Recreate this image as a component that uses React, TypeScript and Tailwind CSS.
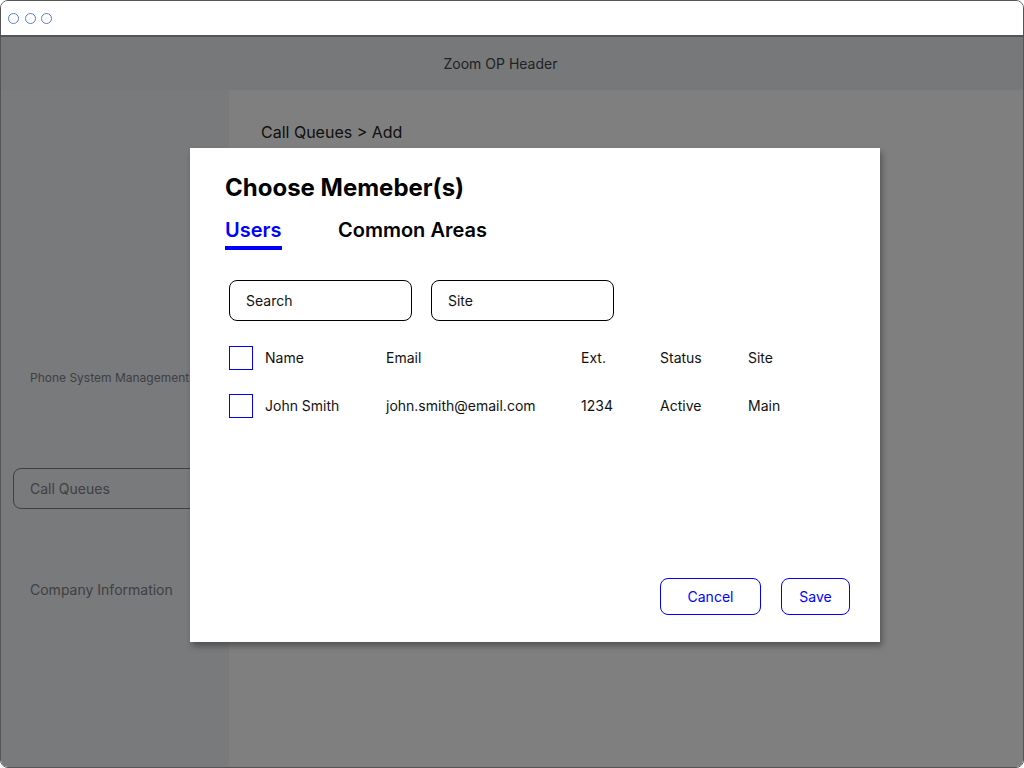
import { ReactNode } from "react";

const font = { fontFamily: "Inter, 'Liberation Sans', sans-serif" };

function Circle() {
  return <span className="size-[11px] rounded-full border-[1.5px] border-[#5b7fcc]" />;
}

function Checkbox() {
  return <span className="block size-6 border border-[#0000ff]" />;
}

function Row({ cells, className }: { cells: ReactNode[]; className?: string }) {
  return (
    <div
      className={
        "grid grid-cols-[36px_121px_195px_79px_88px_1fr] items-center h-6 text-sm text-[#111] " +
        (className ?? "")
      }
    >
      <Checkbox />
      {cells.map((c, i) => (
        <div key={i}>{c}</div>
      ))}
    </div>
  );
}

export default function App() {
  return (
    <div
      style={font}
      className="w-[1024px] h-[768px] bg-white border border-[#555] rounded-lg overflow-hidden flex flex-col"
    >
      <div className="h-[36px] shrink-0 flex items-center gap-[5.5px] pl-[7px] border-b-2 border-[#555] bg-white">
        <Circle />
        <Circle />
        <Circle />
      </div>

      <div className="relative flex-1 flex flex-col">
        <header className="h-[53px] shrink-0 bg-[#eef0f4] flex items-center justify-center pr-[23px] text-sm text-[#444]">
          Zoom OP Header
        </header>
        <div className="flex-1 flex">
          <aside className="w-[228px] shrink-0 bg-[#f2f4f8] flex flex-col">
            <div className="mt-[280px] pl-[29px] text-xs leading-4 text-[#808088]">
              Phone System Management
            </div>
            <div className="mt-[82px] ml-3 w-[210px] h-[41px] border border-[#808088] rounded-lg flex items-center pl-4 text-sm text-[#808088]">
              Call Queues
            </div>
            <div className="mt-[71px] pl-[29px] text-sm leading-5 text-[#808088]">
              Company Information
            </div>
          </aside>
          <main className="flex-1 bg-white pl-8 pt-[30px]">
            <div className="text-base leading-6 text-[#222]">Call Queues &gt; Add</div>
          </main>
        </div>

        <div className="absolute inset-0 bg-black/50" />

        <div className="absolute left-[189px] top-[111px] w-[690px] h-[494px] bg-white shadow-[2px_4px_6px_rgba(0,0,0,0.35)] flex flex-col pt-6 pl-[35px] pr-[30px] pb-[27px]">
          <h1 className="text-2xl leading-8 font-bold text-black">Choose Memeber(s)</h1>
          <div className="mt-3 flex gap-14 text-xl leading-7 font-semibold">
            <div className="flex flex-col w-[57px]">
              <span className="text-[#0000ff]">Users</span>
              <span className="mt-0.5 h-1 bg-[#0000ff]" />
            </div>
            <span className="text-black">Common Areas</span>
          </div>

          <div className="mt-[30px] ml-1 flex gap-[19px]">
            <div className="w-[183px] h-[41px] border border-black rounded-lg flex items-center pl-4 text-sm text-[#111]">
              Search
            </div>
            <div className="w-[183px] h-[41px] border border-black rounded-lg flex items-center pl-4 text-sm text-[#111]">
              Site
            </div>
          </div>

          <div className="ml-1 mt-[25px] flex flex-col gap-6">
            <Row cells={["Name", "Email", "Ext.", "Status", "Site"]} />
            <Row cells={["John Smith", "john.smith@email.com", "1234", "Active", "Main"]} />
          </div>

          <div className="mt-auto flex justify-end gap-5">
            <button className="w-[101px] h-[37px] border border-[#0000ff] rounded-lg text-sm text-[#0000ff]">
              Cancel
            </button>
            <button className="w-[69px] h-[37px] border border-[#0000ff] rounded-lg text-sm text-[#0000ff]">
              Save
            </button>
          </div>
        </div>
      </div>
    </div>
  );
}
